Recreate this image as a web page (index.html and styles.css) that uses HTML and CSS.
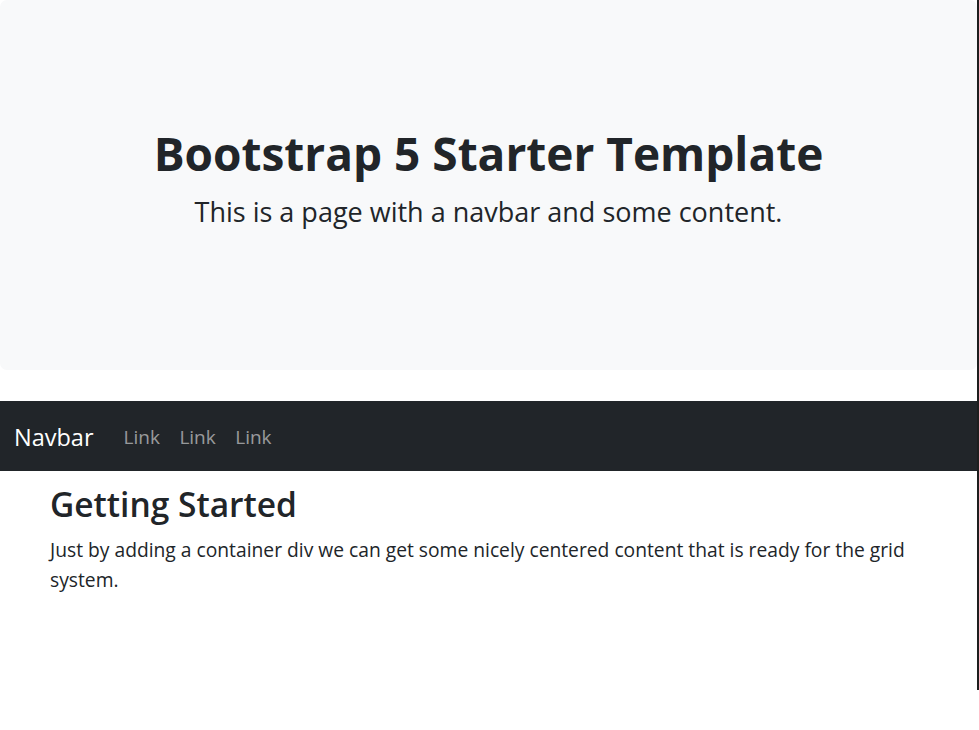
FILE: index.html
```html
<!DOCTYPE html>
<html lang="en">
<head>
<meta charset="utf-8">
<title>Bootstrap 5 Starter Template</title>
<link rel="stylesheet" href="styles.css">
</head>
<body>
<div class="page">
  <header class="jumbotron">
    <h1 class="jumbo-title">Bootstrap 5 Starter Template</h1>
    <p class="lead">This is a page with a navbar and some content.</p>
  </header>
  <nav class="navbar">
    <a class="brand" href="#">Navbar</a>
    <ul class="nav">
      <li><a class="nav-link" href="#">Link</a></li>
      <li><a class="nav-link" href="#">Link</a></li>
      <li><a class="nav-link" href="#">Link</a></li>
    </ul>
  </nav>
  <main class="container">
    <h2 class="section-title">Getting Started</h2>
    <p class="text">Just by adding a container div we can get some nicely centered content that is ready for the grid system.</p>
  </main>
</div>
<div class="edge-line"></div>
</body>
</html>
```

FILE: styles.css
```css
html, body {
  margin: 0;
  padding: 0;
  background: #fff;
}
body {
  font-family: "Open Sans", "Noto Sans", sans-serif;
  color: #212529;
  font-size: 20px;
  line-height: 1.5;
}
.page {
  width: 977px;
}
.jumbotron {
  background: #f8f9fa;
  border-radius: 7px;
  padding: 123px 20px 117px;
  margin-bottom: 31px;
  text-align: center;
}
.jumbo-title {
  margin: 0 0 10px;
  font-size: 46px;
  line-height: 60px;
  font-weight: 700;
}
.lead {
  margin: 0 0 22px;
  font-size: 27px;
  line-height: 37.5px;
  font-weight: 400;
}
.navbar {
  background: #212529;
  display: flex;
  align-items: center;
  height: 70px;
  padding: 3px 14px 0;
  box-sizing: border-box;
}
.brand {
  color: #fff;
  text-decoration: none;
  font-size: 23.5px;
  line-height: 37px;
  margin-right: 20px;
}
.nav {
  display: flex;
  list-style: none;
  margin: 0;
  padding: 0;
}
.nav-link {
  display: block;
  color: rgba(255, 255, 255, 0.55);
  text-decoration: none;
  font-size: 19px;
  padding: 0 9.5px 0 10px;
}
.container {
  padding: 12px 50px 0;
}
.section-title {
  margin: 0 0 10px;
  font-size: 33.5px;
  line-height: 42px;
  font-weight: 600;
}
.text {
  margin: 0;
  font-size: 19.25px;
  line-height: 30px;
}
.edge-line {
  position: absolute;
  top: 0;
  left: 977px;
  width: 2px;
  height: 690px;
  background: #1e1e1e;
}
```
